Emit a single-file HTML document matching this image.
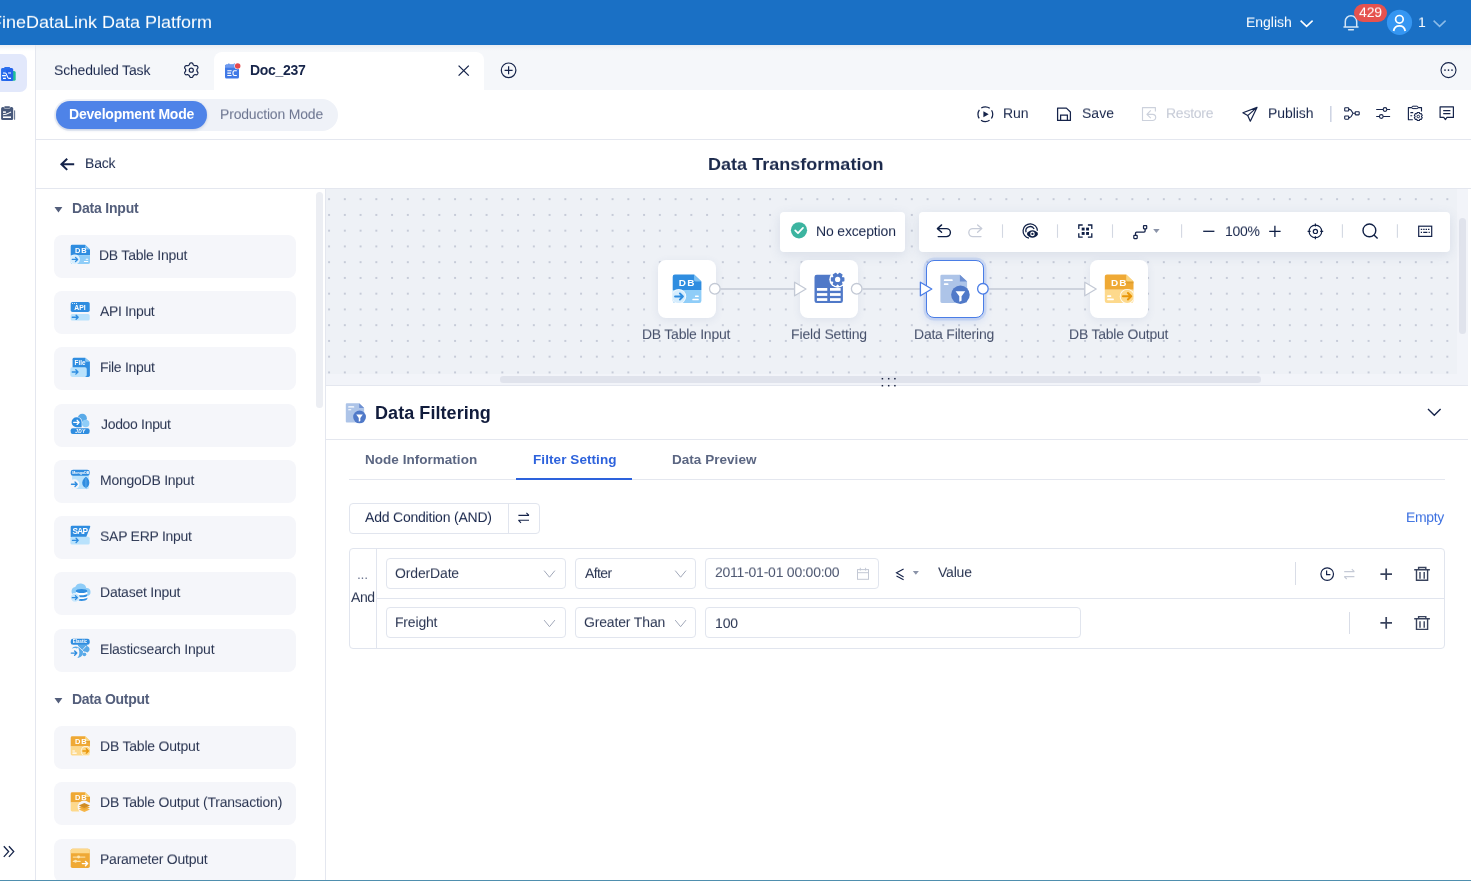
<!DOCTYPE html>
<html lang="en">
<head>
<meta charset="utf-8">
<title>FineDataLink Data Platform</title>
<style>
*{box-sizing:border-box;margin:0;padding:0}
html,body{width:1471px;height:881px;overflow:hidden;background:#fff}
body{font-family:"Liberation Sans",sans-serif;font-size:14px;color:#1f2b48;position:relative}
.a{position:absolute}
.t{position:absolute;white-space:nowrap;line-height:20px;height:20px;will-change:transform}
svg.ov{position:absolute;left:0;top:0;width:1471px;height:881px;overflow:visible;pointer-events:none;will-change:transform}
svg text{font-family:"Liberation Sans",sans-serif}
#hdr{left:0;top:0;width:1471px;height:45px;background:#1a70c5}
#rail{left:0;top:45px;width:36px;height:836px;background:linear-gradient(#eceef3 0,#fafbfc 4px,#fff 6px);border-right:1px solid #e4e7ef}
#railact{left:-10px;top:54px;width:37px;height:38px;background:#e2e8fb;border-radius:7px}
#tabs{left:36px;top:45px;width:1435px;height:45px;background:linear-gradient(#e9ecf2 0,#f3f5f9 4px,#f5f7fa 6px)}
#tabact{left:214px;top:52px;width:270px;height:38px;background:#fff;border-radius:8px 8px 0 0}
#modebar{left:36px;top:90px;width:1435px;height:50px;background:#fff;border-bottom:1px solid #e4e7ef}
#pill{left:54px;top:99px;width:284px;height:32px;background:#eff2f8;border-radius:16px}
#pillact{left:56px;top:101px;width:151px;height:27.5px;background:#4e83e8;border-radius:14px;box-shadow:0 1px 3px rgba(60,90,160,.25)}
#titlebar{left:36px;top:140px;width:1435px;height:49px;background:#fff;border-bottom:1px solid #e4e7ef}
#side{left:36px;top:189px;width:290px;height:692px;background:#fff;border-right:1px solid #e4e7ef}
#sidescroll{left:316px;top:191.5px;width:7px;height:216.5px;border-radius:3.5px;background:#eceef3}
.item{position:absolute;left:54px;width:242px;height:43px;background:#f5f6fa;border-radius:8px}
#canvas{left:326px;top:189px;width:1131px;height:185px;background-color:#eef1f6;
 background-image:radial-gradient(circle at 50% 50%,#c6cbd8 0,#c6cbd8 0.75px,rgba(198,203,216,0) 1.35px);background-size:15.76px 15.76px;background-position:-4.8px 2.3px}
#vtrack{left:1457px;top:189px;width:11px;height:196px;background:#f2f4f9}
#vthumb{left:1459px;top:218px;width:7px;height:116px;border-radius:3.5px;background:#e0e3ec}
#htrack{left:326px;top:374px;width:1131px;height:11px;background:#f2f4f9}
#hthumb{left:500px;top:376.2px;width:761px;height:6.6px;border-radius:3.3px;background:#e0e3ec}
#cline{left:326px;top:385px;width:1142px;height:1px;background:#e4e7ef}
.tb{position:absolute;background:#fff;border-radius:4px;box-shadow:0 3px 12px rgba(70,90,140,.13)}
.node{position:absolute;width:58px;height:58px;background:#fff;border-radius:8px;box-shadow:0 2px 8px rgba(70,90,140,.09)}
#panel{left:326px;top:386px;width:1145px;height:495px;background:#fff}
.hl{position:absolute;height:1px;background:#e4e7ef}
.vl{position:absolute;width:1px;background:#d9dde7}
.box{position:absolute;border:1px solid #e1e5ee;border-radius:4px;background:#fff}
#bottomline{left:0;top:880px;width:1471px;height:1px;background:#4f8fae}

</style>
</head>
<body>
<div id="hdr" class="a"></div>
<div id="rail" class="a"></div>
<div id="railact" class="a"></div>
<div id="tabs" class="a"></div>
<div id="tabact" class="a"></div>
<div id="modebar" class="a"></div>
<div id="pill" class="a"></div>
<div id="pillact" class="a"></div>
<div id="titlebar" class="a"></div>
<div id="side" class="a"></div>
<div id="sidescroll" class="a"></div>
<div class="item" style="top:235px"></div>
<div class="item" style="top:291px"></div>
<div class="item" style="top:347px"></div>
<div class="item" style="top:404px"></div>
<div class="item" style="top:460px"></div>
<div class="item" style="top:516px"></div>
<div class="item" style="top:572px"></div>
<div class="item" style="top:629px"></div>
<div class="item" style="top:726px"></div>
<div class="item" style="top:782px"></div>
<div class="item" style="top:839px"></div>
<div id="canvas" class="a"></div>
<div id="vtrack" class="a"></div>
<div id="vthumb" class="a"></div>
<div id="htrack" class="a"></div>
<div id="hthumb" class="a"></div>
<div id="cline" class="a"></div>
<div class="tb" style="left:780px;top:212px;width:125px;height:40px"></div>
<div class="tb" style="left:919px;top:212px;width:531px;height:40px"></div>
<div class="node" style="left:658px;top:260px"></div>
<div class="node" style="left:800px;top:260px"></div>
<div class="node" style="left:926px;top:260px;border:1.5px solid #4a7de6;box-shadow:0 0 0 2.5px rgba(74,125,230,.16),0 2px 8px rgba(74,125,230,.25)"></div>
<div class="node" style="left:1090px;top:260px"></div>
<div id="panel" class="a"></div>
<div class="hl" style="left:326px;top:439px;width:1142px"></div>
<div class="hl" style="left:349px;top:479px;width:1096px"></div>
<div class="a" style="left:516px;top:478px;width:116px;height:2px;background:#2d62dc"></div>
<div class="box" style="left:349px;top:503px;width:191px;height:31px"></div>
<div class="vl" style="left:508px;top:503px;height:31px;background:#e1e5ee"></div>
<div class="box" style="left:349px;top:548px;width:1096px;height:101px"></div>
<div class="vl" style="left:376px;top:549px;height:99px;background:#e1e5ee"></div>
<div class="hl" style="left:377px;top:598px;width:1067px;background:#e1e5ee"></div>
<div class="box" style="left:386px;top:558px;width:180px;height:31px"></div>
<div class="box" style="left:575px;top:558px;width:121px;height:31px"></div>
<div class="box" style="left:705px;top:558px;width:174px;height:31px"></div>
<div class="box" style="left:386px;top:607px;width:180px;height:31px"></div>
<div class="box" style="left:575px;top:607px;width:121px;height:31px"></div>
<div class="box" style="left:705px;top:607px;width:376px;height:31px"></div>
<div class="vl" style="left:1295px;top:562px;height:23px"></div>
<div class="vl" style="left:1349px;top:612px;height:22px"></div>
<div id="bottomline" class="a"></div>

<svg class="ov" viewBox="0 0 1471 881"><clipPath id="cpdb"><path d="M1.5 0H14.6L19.6 4.8V18A1.5 1.5 0 0 1 18.1 19.5H1.5A1.5 1.5 0 0 1 0 18V1.5A1.5 1.5 0 0 1 1.5 0Z"/></clipPath><path d="M1300.6 20.6L1306.6 26.4L1312.6 20.6" fill="none" stroke="#fff" stroke-width="1.5"/><path d="M1344 27H1358M1345.3 27V21.4A5.7 5.7 0 0 1 1356.7 21.4V27M1348.6 29.7H1353.4" fill="none" stroke="#d3e5f6" stroke-width="1.5" stroke-linecap="round" stroke-linejoin="round"/><rect x="1354" y="4" width="33" height="18" rx="9" fill="#e5524f"/><circle cx="1399.5" cy="22.4" r="12.6" fill="#3596f2"/><circle cx="1399.4" cy="19.3" r="3.8" fill="none" stroke="#fff" stroke-width="1.7"/><path d="M1393.6 31A5.9 6.2 0 0 1 1405.2 31" fill="none" stroke="#fff" stroke-width="1.8"/><path d="M1433.6 20.6L1439.6 26.4L1445.6 20.6" fill="none" stroke="#8bbbe8" stroke-width="1.5"/></svg>
<svg class="ov" viewBox="0 0 1471 881"><rect x="5" y="71" width="10.7" height="9.8" rx="1.6" fill="#1fbf98"/><rect x="1.1" y="68" width="12.1" height="13" rx="1.5" fill="#2463eb"/><rect x="1.1" y="68" width="5" height="13" rx="1.5" fill="#2b74f0" opacity=".6"/><rect x="4.1" y="66.9" width="6.1" height="2.5" rx="1" fill="#2a6eee"/><path d="M3 73H5.2C7.2 73 6.8 78.3 8.8 78.3H11M8.1 73H11M2.1 75.6H5.9M3 78.3H5.9" fill="none" stroke="#fff" stroke-width="1.15"/><rect x="1.1" y="107.1" width="12.1" height="12.8" rx="1.5" fill="#47587a"/><rect x="4.1" y="106" width="6.1" height="2.4" rx=".9" fill="#47587a" stroke="#fff" stroke-width=".5"/><path d="M3 112.1H5.9" stroke="#fff" stroke-width="1.5"/><path d="M3 114.8C6.6 114.8 8 113.6 11 111.9" fill="none" stroke="#fff" stroke-width="1.1"/><path d="M3 117.2H11" stroke="#fff" stroke-width="1.6"/><rect x="14" y="110.2" width="1.15" height="9.6" rx=".5" fill="#6c7a96"/><path d="M3.8 846.3L8.6 851.6L3.8 856.9M8.9 846.3L13.7 851.6L8.9 856.9" fill="none" stroke="#17254a" stroke-width="1.35"/></svg>
<svg class="ov" viewBox="0 0 1471 881"><path d="M196.90 70.20 L196.90 70.49 L196.93 70.79 L197.00 71.10 L197.20 71.45 L197.53 71.87 L197.84 72.32 L197.95 72.75 L197.92 73.15 L197.79 73.51 L197.62 73.85 L197.41 74.17 L197.16 74.46 L196.84 74.69 L196.41 74.80 L195.86 74.76 L195.33 74.68 L194.93 74.69 L194.62 74.78 L194.36 74.91 L194.10 75.05 L193.85 75.20 L193.60 75.37 L193.37 75.59 L193.16 75.93 L192.97 76.43 L192.73 76.92 L192.42 77.24 L192.06 77.40 L191.68 77.48 L191.30 77.50 L190.92 77.48 L190.54 77.40 L190.18 77.24 L189.87 76.92 L189.63 76.43 L189.44 75.93 L189.23 75.59 L189.00 75.37 L188.75 75.20 L188.50 75.05 L188.24 74.91 L187.98 74.78 L187.67 74.69 L187.27 74.68 L186.74 74.76 L186.19 74.80 L185.76 74.69 L185.44 74.46 L185.19 74.17 L184.98 73.85 L184.81 73.51 L184.68 73.15 L184.65 72.75 L184.76 72.32 L185.07 71.87 L185.40 71.45 L185.60 71.10 L185.67 70.79 L185.70 70.49 L185.70 70.20 L185.70 69.91 L185.67 69.61 L185.60 69.30 L185.40 68.95 L185.07 68.53 L184.76 68.08 L184.65 67.65 L184.68 67.25 L184.81 66.89 L184.98 66.55 L185.19 66.23 L185.44 65.94 L185.76 65.71 L186.19 65.60 L186.74 65.64 L187.27 65.72 L187.67 65.71 L187.98 65.62 L188.24 65.49 L188.50 65.35 L188.75 65.20 L189.00 65.03 L189.23 64.81 L189.44 64.47 L189.63 63.97 L189.87 63.48 L190.18 63.16 L190.54 63.00 L190.92 62.92 L191.30 62.90 L191.68 62.92 L192.06 63.00 L192.42 63.16 L192.73 63.48 L192.97 63.97 L193.16 64.47 L193.37 64.81 L193.60 65.03 L193.85 65.20 L194.10 65.35 L194.36 65.49 L194.62 65.62 L194.93 65.71 L195.33 65.72 L195.86 65.64 L196.41 65.60 L196.84 65.71 L197.16 65.94 L197.41 66.23 L197.62 66.55 L197.79 66.89 L197.92 67.25 L197.95 67.65 L197.84 68.08 L197.53 68.53 L197.20 68.95 L197.00 69.30 L196.93 69.61 L196.90 69.91Z" fill="none" stroke="#15234a" stroke-width="1.2" stroke-linejoin="round"/><circle cx="191.3" cy="70.2" r="2.05" fill="none" stroke="#15234a" stroke-width="1.15"/><rect x="228.1" y="63.2" width="1.5" height="2.6" rx=".7" fill="#7ea6f1"/><rect x="233.7" y="63.2" width="1.5" height="2.6" rx=".7" fill="#7ea6f1"/><rect x="225" y="64.6" width="14" height="13.9" rx="1.5" fill="#4079e6"/><path d="M226.5 64.6H237.5A1.5 1.5 0 0 1 239 66.1V67.8H225V66.1A1.5 1.5 0 0 1 226.5 64.6Z" fill="#6f9bef"/><path d="M227.3 70.7H231.6M227.3 73.1H231M227.3 75.5H231.6M236.8 70.7H234.4C232.5 70.7 232.5 75.5 234.4 75.5H236.8" fill="none" stroke="#fff" stroke-width="1.1"/><circle cx="237.7" cy="65.9" r="3.3" fill="#fff"/><circle cx="237.7" cy="65.9" r="2.75" fill="#e5484d"/><path d="M458.6 65.6L468.8 75.6M468.8 65.6L458.6 75.6" stroke="#15234a" stroke-width="1.3"/><circle cx="508.6" cy="70.3" r="7.3" fill="none" stroke="#15234a" stroke-width="1.2"/><path d="M504.6 70.3H512.6M508.6 66.3V74.3" stroke="#15234a" stroke-width="1.2"/><circle cx="1448.5" cy="70.1" r="7.5" fill="none" stroke="#15234a" stroke-width="1.1"/><circle cx="1445" cy="70.1" r=".85" fill="#15234a"/><circle cx="1448.5" cy="70.1" r=".85" fill="#15234a"/><circle cx="1452" cy="70.1" r=".85" fill="#15234a"/></svg>
<svg class="ov" viewBox="0 0 1471 881"><circle cx="985.35" cy="114.25" r="7.4" fill="none" stroke="#15234a" stroke-width="1.25" stroke-dasharray="9.04 2.584" stroke-dashoffset="4.52"/><path d="M983.4 111.3V117.2L988.7 114.25Z" fill="#15234a"/><path d="M1057.6 108.1H1066.4L1070.4 112V120.4H1057.6Z" fill="none" stroke="#15234a" stroke-width="1.25" stroke-linejoin="round"/><path d="M1060.6 120.4V115H1067.4V120.4" fill="none" stroke="#15234a" stroke-width="1.25"/><path d="M1155.4 111.6V107.6H1142.5V120.5H1152.6A3.1 3.1 0 0 0 1152.6 114.3H1147.2M1150.8 110.3L1146.9 114.3L1150.8 118.1" fill="none" stroke="#ccd1dc" stroke-width="1.15" stroke-linejoin="round"/><path d="M1257 107.4L1242.9 112.7L1247.7 115.6L1250.3 121.2ZM1247.7 115.6L1257 107.4" fill="none" stroke="#15234a" stroke-width="1.2" stroke-linejoin="round"/><path d="M1330.8 106V122" stroke="#ccd2e2" stroke-width="1.5"/><rect x="1344.7" y="107.8" width="4" height="3.2" rx=".6" fill="none" stroke="#15234a" stroke-width="1.1"/><rect x="1344.7" y="116" width="4" height="3.2" rx=".6" fill="none" stroke="#15234a" stroke-width="1.1"/><rect x="1355.2" y="111.7" width="4" height="3.2" rx=".6" fill="none" stroke="#15234a" stroke-width="1.1"/><path d="M1348.7 109.4H1349.6C1352 109.4 1352 113.3 1353.4 113.3H1355.2M1348.7 117.6H1349.6C1352 117.6 1352 113.3 1353.4 113.3" fill="none" stroke="#15234a" stroke-width="1.1"/><path d="M1376.2 109.5H1390.1M1376.2 116.5H1390.1" stroke="#15234a" stroke-width="1.2"/><circle cx="1385" cy="109.5" r="1.85" fill="#fff" stroke="#15234a" stroke-width="1.1"/><circle cx="1381.3" cy="116.5" r="1.85" fill="#fff" stroke="#15234a" stroke-width="1.1"/><path d="M1412.8 119.7H1408.4V107.6H1421.5V111.4" fill="none" stroke="#15234a" stroke-width="1.15" stroke-linejoin="round"/><rect x="1411.8" y="106.2" width="6.3" height="2.4" rx="1.2" fill="#fff" stroke="#15234a" stroke-width="1"/><path d="M1410.4 112.6H1413.2M1410.4 115.7H1412.2" stroke="#15234a" stroke-width="1.1"/><path d="M1422.31 117.57 L1421.23 119.43 L1420.21 119.13 L1419.62 119.47 L1419.37 120.51 L1417.23 120.51 L1416.98 119.47 L1416.39 119.13 L1415.37 119.43 L1414.29 117.57 L1415.07 116.84 L1415.07 116.16 L1414.29 115.43 L1415.37 113.57 L1416.39 113.87 L1416.98 113.53 L1417.23 112.49 L1419.37 112.49 L1419.62 113.53 L1420.21 113.87 L1421.23 113.57 L1422.31 115.43 L1421.53 116.16 L1421.53 116.84Z" fill="#fff" stroke="#15234a" stroke-width="1.05" stroke-linejoin="round"/><circle cx="1418.3" cy="116.5" r="1.3" fill="none" stroke="#15234a" stroke-width="1"/><path d="M1440.1 106.8H1453.4V117.4H1447L1445.4 119.6L1443.8 117.4H1440.1Z" fill="none" stroke="#15234a" stroke-width="1.2" stroke-linejoin="round"/><path d="M1443.2 110.6H1450.4M1443.2 113.6H1450.4" stroke="#15234a" stroke-width="1.2"/><path d="M61.6 164.3H74.2M67.2 158.7L61.4 164.3L67.2 169.9" fill="none" stroke="#15234a" stroke-width="2" stroke-linejoin="miter"/><path d="M54.5 207H62.4L58.45 212.4Z" fill="#535e7b"/><path d="M54.5 698H62.4L58.45 703.4Z" fill="#535e7b"/></svg>
<svg class="ov" viewBox="0 0 1471 881"><g transform="translate(70.70 244.70) scale(0.9850)"><path d="M1.5 0H14.6L19.6 4.8V10.6H0V1.5A1.5 1.5 0 0 1 1.5 0Z" fill="#2f8de0"/><path d="M14.6 0L19.6 4.8H15.6A1 1 0 0 1 14.6 3.8Z" fill="#7cc0f2"/><path d="M0 10.6H19.6V18A1.5 1.5 0 0 1 18.1 19.5H1.5A1.5 1.5 0 0 1 0 18Z" fill="#8fcdf8"/><g clip-path="url(#cpdb)"><circle cx="4.1" cy="15" r="5.1" fill="#fff" opacity=".9"/><circle cx="4.1" cy="15" r="4.5" fill="#d6edfd"/></g><path d="M1.6 15H7M4.9 12.9L7 15L4.9 17.1" fill="none" stroke="#2f8de0" stroke-width="1.3" stroke-linecap="round" stroke-linejoin="round"/><rect x="15.2" y="14.3" width="2.6" height="1.1" rx=".4" fill="#fff"/><rect x="13.4" y="16.5" width="4.4" height="1.1" rx=".4" fill="#fff"/><text x="4.3" y="8.1" font-size="7.6" font-weight="700" fill="#fff" letter-spacing="0.9">DB</text></g><g transform="translate(70.70 300.70) scale(0.9850)"><rect x="0" y="1.2" width="19.3" height="10.2" rx="1.8" fill="#2f8de0"/><circle cx="1.9" cy="2.8" r=".55" fill="#fff"/><circle cx="3.9" cy="2.8" r=".55" fill="#fff"/><circle cx="5.9" cy="2.8" r=".55" fill="#fff"/><text x="3.6" y="9.4" font-size="6.9" font-weight="700" fill="#fff" letter-spacing=".1">API</text><rect x="0" y="13.6" width="19.3" height="6.6" rx="1.6" fill="#b9e2fc"/><path d="M1.6 16.8H7.6M5.5 14.700000000000001L7.6 16.8L5.5 18.900000000000002" fill="none" stroke="#2f8de0" stroke-width="1.4" stroke-linecap="round" stroke-linejoin="round"/></g><g transform="translate(70.70 356.70) scale(0.9850)"><g transform="translate(0 1.1)"><path d="M3.4 0H14.7L19.5 4V17.8A1.6 1.6 0 0 1 17.9 19.4H1.9V1.5A1.5 1.5 0 0 1 3.4 0Z" fill="#2f8de0"/><path d="M14.7 0L19.5 4H15.7A1 1 0 0 1 14.7 3Z" fill="#8ccaf6"/><rect x="-0.4" y="9.6" width="16.7" height="9.8" rx="1.8" fill="#b9e2fc"/><path d="M1.6 14.4H7.4M5.2 12.2L7.4 14.4L5.2 16.6" fill="none" stroke="#2f8de0" stroke-width="1.4" stroke-linecap="round" stroke-linejoin="round"/><text x="3.8" y="7.1" font-size="6.4" font-weight="700" fill="#fff" letter-spacing=".1">File</text></g></g><g transform="translate(70.70 413.70) scale(0.9850)"><circle cx="11.8" cy="4.6" r="4.6" fill="#5aaae8"/><circle cx="15.2" cy="10" r="3.8" fill="#8fcdf8"/><circle cx="6" cy="8.8" r="5.8" fill="#f5f6fa"/><path d="M6 3.6A5.1 5.1 0 1 0 6 13.8H11.1V8.7A5.1 5.1 0 0 0 6 3.6Z" fill="#2f8de0"/><path d="M3 8.8H8.6M6.5 6.700000000000001L8.6 8.8L6.5 10.9" fill="none" stroke="#fff" stroke-width="1.3" stroke-linecap="round" stroke-linejoin="round"/><rect x="0" y="14.8" width="19.2" height="5.8" rx="2" fill="#2f8de0"/><text x="4.6" y="19.4" font-size="4.8" font-weight="700" font-style="italic" fill="#fff" letter-spacing=".4">JDY</text></g><g transform="translate(70.70 469.70) scale(0.9850)"><rect x="1.4" y="5" width="17" height="14.6" rx="1.2" fill="#b9e2fc"/><rect x="0" y="0" width="19.3" height="6.2" rx="2.4" fill="#2f8de0"/><text x="1.6" y="4.5" font-size="3.7" font-weight="700" fill="#fff">MongoDB</text><path d="M15.5 7.2C18.6 9.6 19.6 12.6 18.6 15.2C18 16.8 16.8 17.8 15.8 18.2L15.7 20.2L15.2 18.2C14 17.8 12.6 16.8 12 15.2C11 12.6 12.4 9.6 15.5 7.2Z" fill="#2f8de0"/><path d="M15.5 8.4V18" stroke="#8fcdf8" stroke-width=".5"/><circle cx="3.8" cy="14.8" r="5" fill="#f5f6fa"/><path d="M0.8 14.8H6.6M4.3999999999999995 12.600000000000001L6.6 14.8L4.3999999999999995 17.0" fill="none" stroke="#2f8de0" stroke-width="1.4" stroke-linecap="round" stroke-linejoin="round"/></g><g transform="translate(70.70 525.70) scale(0.9850)"><path d="M1.4 0H19A.9.9 0 0 1 19.8 1.2L15.8 11.4H0V1.4A1.4 1.4 0 0 1 1.4 0Z" fill="#2f8de0"/><text x="1.9" y="8.4" font-size="8.4" font-weight="700" fill="#fff" letter-spacing="-.75">SAP</text><rect x="-0.3" y="11.2" width="19.6" height="8" rx="1.6" fill="#b9e2fc"/><path d="M1.8 14.9H7.6M5.5 12.8L7.6 14.9L5.5 17.0" fill="none" stroke="#2f8de0" stroke-width="1.4" stroke-linecap="round" stroke-linejoin="round"/></g><g transform="translate(70.70 581.70) scale(0.9850)"><g transform="translate(0 1)"><path d="M5 13.4A4.6 4.6 0 0 1 4.6 4.3A6 6 0 0 1 15.8 5.4A4 4 0 0 1 16.4 13.4Z" fill="#8fcdf8"/><path d="M5 10.4C5 8 17 8 17 10.4V16.6C17 19.2 5 19.2 5 16.6Z" fill="#fff"/><ellipse cx="11" cy="8.4" rx="5.9" ry="2.1" fill="#2f8de0"/><path d="M5.1 11.2C6.4 13.2 15.6 13.2 16.9 11.2V13.2C15.6 15.4 6.4 15.4 5.1 13.2Z" fill="#2f8de0"/><path d="M5.1 15C6.4 17 15.6 17 16.9 15V16.6C15.6 19.2 6.4 19.2 5.1 16.6Z" fill="#2f8de0"/><circle cx="4.4" cy="15.2" r="4.8" fill="#f5f6fa"/><circle cx="4.4" cy="15.2" r="4.2" fill="#c7e7fc"/><path d="M1.6 15.2H6.8M4.8 13.2L6.8 15.2L4.8 17.2" fill="none" stroke="#2f8de0" stroke-width="1.3" stroke-linecap="round" stroke-linejoin="round"/></g></g><g transform="translate(70.70 638.70) scale(0.9850)"><path d="M7.2 5.6H16.2L17 7.6C19.8 8.6 19.9 12.6 17 13.9L14.4 12.9L12.4 13.4C12.8 16.6 10.4 19 6.8 19.5C9 17 9.4 13.6 8 10.2Z" fill="#5aaae8"/><circle cx="13.9" cy="15.9" r="1.9" fill="#5aaae8"/><path d="M6.7 6.9L13.8 13.8M15.7 7.4L12.2 11.2" stroke="#f5f6fa" stroke-width=".85"/><path d="M1.1 10.3C2.6 7.6 5.8 7.2 7.6 8.7L6.4 9.9C5 9 3 9.3 1.1 10.3Z" fill="#5aaae8"/><rect x="0" y="0" width="19.3" height="6.2" rx="2.4" fill="#2f8de0"/><text x="2.2" y="4.6" font-size="4.6" font-weight="700" fill="#fff" letter-spacing="-.05">Elastic</text><circle cx="3.6" cy="14.6" r="4.7" fill="#f5f6fa"/><path d="M0.6 14.6H6.2M4.0 12.399999999999999L6.2 14.6L4.0 16.8" fill="none" stroke="#2f8de0" stroke-width="1.4" stroke-linecap="round" stroke-linejoin="round"/></g><g transform="translate(70.70 736.30) scale(0.9850)"><path d="M1.5 0H14.6L19.6 4.8V10.4H0V1.5A1.5 1.5 0 0 1 1.5 0Z" fill="#efa935"/><path d="M14.6 0L19.6 4.8H15.6A1 1 0 0 1 14.6 3.8Z" fill="#fbd57e"/><rect x="14.8" y="5" width="4.8" height="1.1" fill="#d79a2c" opacity=".7"/><path d="M0 10.4H19.6V18A1.5 1.5 0 0 1 18.1 19.5H1.5A1.5 1.5 0 0 1 0 18Z" fill="#fdd98c"/><g clip-path="url(#cpdb)"><circle cx="15.3" cy="15" r="5.1" fill="#fff" opacity=".9"/><circle cx="15.3" cy="15" r="4.5" fill="#fdd98c"/></g><path d="M12.4 14.9H18.0M15.8 12.7L18.0 14.9L15.8 17.1" fill="none" stroke="#e8960a" stroke-width="1.4" stroke-linecap="round" stroke-linejoin="round"/><rect x="1.6" y="14.3" width="2.8" height="1.1" rx=".4" fill="#fff"/><rect x="1.6" y="16.5" width="4.6" height="1.1" rx=".4" fill="#fff"/><text x="4.3" y="8.1" font-size="7.6" font-weight="700" fill="#fff" letter-spacing="0.9">DB</text></g><g transform="translate(70.70 792.30) scale(0.9850)"><path d="M1.5 0H14.6L19.6 4.8V10.4H0V1.5A1.5 1.5 0 0 1 1.5 0Z" fill="#efa935"/><path d="M14.6 0L19.6 4.8H15.6A1 1 0 0 1 14.6 3.8Z" fill="#fbd57e"/><rect x="14.8" y="5" width="4.8" height="1.1" fill="#d79a2c" opacity=".6"/><path d="M0 10.4H9V19.5H1.5A1.5 1.5 0 0 1 0 18Z" fill="#fdd98c"/><circle cx="13.6" cy="15" r="6.6" fill="#f5f6fa"/><path d="M8.2 17.4L13.8 15L19.6 17.4L13.8 19.9Z" fill="#f5b548"/><path d="M8.2 15.4L13.8 13L19.6 15.4L13.8 17.9Z" fill="#efa935"/><path d="M8.2 13.3L13.8 10.8L19.6 13.3L13.8 15.9Z" fill="#d08c24"/><text x="4.3" y="8.1" font-size="7.6" font-weight="700" fill="#fff" letter-spacing=".9">DB</text></g><g transform="translate(70.70 848.70) scale(0.9850)"><rect x="0" y="0" width="19.4" height="19.6" rx="1.8" fill="#efa935"/><path d="M1.8 0H17.6A1.8 1.8 0 0 1 19.4 1.8V4.6H0V1.8A1.8 1.8 0 0 1 1.8 0Z" fill="#fdd98c"/><rect x="2" y="7.9" width="13" height="1.2" rx=".6" fill="#fbdc9a"/><circle cx="8" cy="8.5" r="1.5" fill="#fde7b5"/><rect x="2" y="12.2" width="8.2" height="1.2" rx=".6" fill="#fde7b5"/><circle cx="4.9" cy="12.8" r="1.5" fill="#fde7b5"/><path d="M11.8 15.1H17.2M15.0 12.899999999999999L17.2 15.1L15.0 17.3" fill="none" stroke="#fff" stroke-width="1.4" stroke-linecap="round" stroke-linejoin="round"/></g></svg>
<svg class="ov" viewBox="0 0 1471 881"><path d="M720.5 289H795" stroke="#c3c9d5" stroke-width="1.6"/><path d="M862.5 289H921" stroke="#c3c9d5" stroke-width="1.6"/><path d="M989 289H1085" stroke="#c3c9d5" stroke-width="1.6"/><path d="M794.6 282.2L806.0 289L794.6 295.8Z" fill="#fff" stroke="#c3c9d5" stroke-width="1.3" stroke-linejoin="round"/><path d="M920.4 282.2L931.8 289L920.4 295.8Z" fill="#fff" stroke="#4a7de6" stroke-width="1.3" stroke-linejoin="round"/><path d="M1084.8 282.2L1096.2 289L1084.8 295.8Z" fill="#fff" stroke="#c3c9d5" stroke-width="1.3" stroke-linejoin="round"/><circle cx="714.8" cy="288.8" r="5.3" fill="#fff" stroke="#c3c9d5" stroke-width="1.3"/><circle cx="856.7" cy="288.8" r="5.3" fill="#fff" stroke="#c3c9d5" stroke-width="1.3"/><circle cx="982.9" cy="288.8" r="5.3" fill="#fff" stroke="#4a7de6" stroke-width="1.3"/><g transform="translate(672.70 274.50) scale(1.4650)"><path d="M1.5 0H14.6L19.6 4.8V10.6H0V1.5A1.5 1.5 0 0 1 1.5 0Z" fill="#2f8de0"/><path d="M14.6 0L19.6 4.8H15.6A1 1 0 0 1 14.6 3.8Z" fill="#7cc0f2"/><path d="M0 10.6H19.6V18A1.5 1.5 0 0 1 18.1 19.5H1.5A1.5 1.5 0 0 1 0 18Z" fill="#8fcdf8"/><g clip-path="url(#cpdb)"><circle cx="4.1" cy="15" r="5.1" fill="#fff" opacity=".9"/><circle cx="4.1" cy="15" r="4.5" fill="#d6edfd"/></g><path d="M1.6 15H7M4.9 12.9L7 15L4.9 17.1" fill="none" stroke="#2f8de0" stroke-width="1.3" stroke-linecap="round" stroke-linejoin="round"/><rect x="15.2" y="14.3" width="2.6" height="1.1" rx=".4" fill="#fff"/><rect x="13.4" y="16.5" width="4.4" height="1.1" rx=".4" fill="#fff"/><text x="4.2" y="7.95" font-size="6.8" font-weight="700" fill="#fff" letter-spacing="0.8">DB</text></g><g transform="translate(814.50 274.80) scale(1.4200)"><rect x="0" y="0" width="20" height="19.8" rx="1.6" fill="#5079c8"/><circle cx="16.3" cy="3.25" r="5.9" fill="#fff"/><path d="M20.59 2.29 L20.59 4.21 L19.15 4.46 L18.78 5.11 L19.28 6.49 L17.62 7.45 L16.68 6.33 L15.92 6.33 L14.98 7.45 L13.32 6.49 L13.82 5.11 L13.45 4.46 L12.01 4.21 L12.01 2.29 L13.45 2.04 L13.82 1.39 L13.32 0.01 L14.98 -0.95 L15.92 0.17 L16.68 0.17 L17.62 -0.95 L19.28 0.01 L18.78 1.39 L19.15 2.04Z" fill="#5079c8" stroke="#5079c8" stroke-width="1" stroke-linejoin="round"/><circle cx="16.3" cy="3.25" r="1.85" fill="#fff"/><rect x="1.7" y="9.3" width="7.3" height="1.95" fill="#fff"/><rect x="10.9" y="9.3" width="7.5" height="1.95" fill="#fff"/><rect x="1.7" y="12.9" width="7.3" height="1.95" fill="#fff"/><rect x="10.9" y="12.9" width="7.5" height="1.95" fill="#fff"/><rect x="1.7" y="16.45" width="7.3" height="1.95" fill="#fff"/><rect x="10.9" y="16.45" width="7.5" height="1.95" fill="#fff"/></g><g transform="translate(940.40 274.70) scale(1.4200)"><path d="M1 0H13.7L18.8 4.85V18.8A1 1 0 0 1 17.8 19.85H1A1 1 0 0 1 0 18.85V1A1 1 0 0 1 1 0Z" fill="#adc4e8"/><path d="M13.7 0L18.8 4.85H13.7Z" fill="#6e90d2"/><rect x="2.4" y="3.25" width="6.3" height="1.2" rx=".6" fill="#fff"/><rect x="2.4" y="6.1" width="3.3" height="1.2" rx=".6" fill="#fff"/><circle cx="14.1" cy="14.1" r="6.55" fill="#5079c8"/><path d="M10.7 11.6H17.5L14.9 15.1V18.3L13.3 19V15.1Z" fill="#fff"/></g><g transform="translate(1104.80 274.40) scale(1.4650)"><path d="M1.5 0H14.6L19.6 4.8V10.4H0V1.5A1.5 1.5 0 0 1 1.5 0Z" fill="#efa935"/><path d="M14.6 0L19.6 4.8H15.6A1 1 0 0 1 14.6 3.8Z" fill="#fbd57e"/><rect x="14.8" y="5" width="4.8" height="1.1" fill="#d79a2c" opacity=".7"/><path d="M0 10.4H19.6V18A1.5 1.5 0 0 1 18.1 19.5H1.5A1.5 1.5 0 0 1 0 18Z" fill="#fdd98c"/><g clip-path="url(#cpdb)"><circle cx="15.3" cy="15" r="5.1" fill="#fff" opacity=".9"/><circle cx="15.3" cy="15" r="4.5" fill="#fdd98c"/></g><path d="M12.4 14.9H18.0M15.8 12.7L18.0 14.9L15.8 17.1" fill="none" stroke="#e8960a" stroke-width="1.4" stroke-linecap="round" stroke-linejoin="round"/><rect x="1.6" y="14.3" width="2.8" height="1.1" rx=".4" fill="#fff"/><rect x="1.6" y="16.5" width="4.6" height="1.1" rx=".4" fill="#fff"/><text x="4.2" y="7.95" font-size="6.8" font-weight="700" fill="#fff" letter-spacing="0.8">DB</text></g><circle cx="799" cy="230.3" r="8.1" fill="#3cb4a0"/><path d="M795.2 230.4L798 233.2L803 227.8" fill="none" stroke="#fff" stroke-width="1.7" stroke-linecap="round" stroke-linejoin="round"/><path d="M941.6 224.9L937.4 228.6L941.6 232.3M937.6 228.6H946.4A4 4 0 0 1 946.4 236.6H938.2" fill="none" stroke="#0f1f45" stroke-width="1.4" stroke-linecap="round" stroke-linejoin="round"/><path d="M977.6 224.9L981.8 228.6L977.6 232.3M981.6 228.6H972.8A4 4 0 0 0 972.8 236.6H981" fill="none" stroke="#c7ccd8" stroke-width="1.3" stroke-linecap="round" stroke-linejoin="round"/><path d="M1002.5 224.3V237.8" stroke="#d3d8e2" stroke-width="1.1"/><path d="M1057.5 224.3V237.8" stroke="#d3d8e2" stroke-width="1.1"/><path d="M1112.5 224.3V237.8" stroke="#d3d8e2" stroke-width="1.1"/><path d="M1181.6 224.3V237.8" stroke="#d3d8e2" stroke-width="1.1"/><path d="M1342.4 224.3V237.8" stroke="#d3d8e2" stroke-width="1.1"/><path d="M1397.4 224.3V237.8" stroke="#d3d8e2" stroke-width="1.1"/><path d="M1037.46 230.75A7.2 7.2 0 1 0 1029 238.09" fill="none" stroke="#0f1f45" stroke-width="1.25"/><path d="M1034.14 228.93A4.4 4.4 0 0 0 1026.03 232.21" fill="none" stroke="#0f1f45" stroke-width="1.25"/><path d="M1026.8 233.9C1029 228.9 1035.9 228.9 1038.1 233.9C1035.9 238.9 1029 238.9 1026.8 233.9Z" fill="#0f1f45"/><circle cx="1032.45" cy="233.9" r="2.3" fill="#fff"/><circle cx="1032.45" cy="233.9" r="1.15" fill="#0f1f45"/><path d="M1078.8 228.9V225H1082.7M1087.9 225H1091.8V228.9M1091.8 233.3V237.2H1087.9M1082.7 237.2H1078.8V233.3" fill="none" stroke="#0f1f45" stroke-width="1.3"/><rect x="1081.7" y="227.6" width="2.9" height="2.9" fill="#0f1f45"/><rect x="1086.1" y="227.6" width="2.9" height="2.9" fill="#0f1f45"/><rect x="1081.7" y="232" width="2.9" height="2.9" fill="#0f1f45"/><rect x="1086.1" y="232" width="2.9" height="2.9" fill="#0f1f45"/><rect x="1143.5" y="225.6" width="3.2" height="3.2" rx=".5" fill="none" stroke="#15234a" stroke-width="1.2"/><rect x="1133.8" y="235.4" width="3.4" height="3.2" rx=".5" fill="none" stroke="#15234a" stroke-width="1.2"/><path d="M1145.1 228.8V231A1.1 1.1 0 0 1 1144 232.1H1136.6A1.1 1.1 0 0 0 1135.5 233.2V235.4" fill="none" stroke="#15234a" stroke-width="1.3"/><path d="M1153.2 229.1H1159.6L1156.4 232.9Z" fill="#8a93a8"/><path d="M1203.2 231.3H1214.4" stroke="#0f1f45" stroke-width="1.3"/><path d="M1269.2 231.3H1280.6M1274.9 225.7V236.9" stroke="#0f1f45" stroke-width="1.3"/><circle cx="1315.4" cy="231.4" r="6.3" fill="none" stroke="#0f1f45" stroke-width="1.2"/><circle cx="1315.4" cy="231.4" r="2.1" fill="none" stroke="#0f1f45" stroke-width="1.2"/><path d="M1315.4 223.6V226.6M1315.4 236.2V239.2M1307.6 231.4H1310.6M1320.2 231.4H1323.2" stroke="#0f1f45" stroke-width="1.2"/><circle cx="1369.4" cy="230.4" r="6.4" fill="none" stroke="#0f1f45" stroke-width="1.4"/><path d="M1374 235L1377.6 238.4" stroke="#0f1f45" stroke-width="1.4"/><rect x="1418.7" y="226.2" width="13" height="10.2" fill="none" stroke="#15234a" stroke-width="1.2"/><path d="M1420.8 229.4H1429.6" stroke="#15234a" stroke-width="1.1" stroke-dasharray="1.4 1"/><path d="M1420.8 232.4H1422M1423.2 232.4H1427.4M1428.6 232.4H1429.8" stroke="#15234a" stroke-width="1.1"/><rect x="881.65" y="377.95" width="1.5" height="1.5" fill="#1a2340"/><rect x="881.65" y="384.95" width="1.5" height="1.5" fill="#1a2340"/><rect x="887.95" y="377.95" width="1.5" height="1.5" fill="#1a2340"/><rect x="887.95" y="384.95" width="1.5" height="1.5" fill="#1a2340"/><rect x="894.15" y="377.95" width="1.5" height="1.5" fill="#1a2340"/><rect x="894.15" y="384.95" width="1.5" height="1.5" fill="#1a2340"/></svg>
<svg class="ov" viewBox="0 0 1471 881"><g transform="translate(345.80 403.20) scale(0.9750)"><path d="M1 0H13.7L18.8 4.85V18.8A1 1 0 0 1 17.8 19.85H1A1 1 0 0 1 0 18.85V1A1 1 0 0 1 1 0Z" fill="#adc4e8"/><path d="M13.7 0L18.8 4.85H13.7Z" fill="#6e90d2"/><rect x="2.4" y="3.25" width="6.3" height="1.2" rx=".6" fill="#fff"/><rect x="2.4" y="6.1" width="3.3" height="1.2" rx=".6" fill="#fff"/><circle cx="14.1" cy="14.1" r="6.55" fill="#5079c8"/><path d="M10.7 11.6H17.5L14.9 15.1V18.3L13.3 19V15.1Z" fill="#fff"/></g><path d="M1428 409L1434.3 415.2L1440.6 409" fill="none" stroke="#15234a" stroke-width="1.4"/><path d="M518.4 515.4H529M526.4 512.8L529 515.4M529 520.2H518.4M521 522.8L518.4 520.2" fill="none" stroke="#15234a" stroke-width="1.1"/><path d="M544.1 570.6L549.5 577.2L554.9 570.6" fill="none" stroke="#a0a7b8" stroke-width="1"/><path d="M675.2 570.6L680.6 577.2L686.0 570.6" fill="none" stroke="#a0a7b8" stroke-width="1"/><path d="M544.1 620.1L549.5 626.7L554.9 620.1" fill="none" stroke="#a0a7b8" stroke-width="1"/><path d="M675.2 620.1L680.6 626.7L686.0 620.1" fill="none" stroke="#a0a7b8" stroke-width="1"/><rect x="857.5" y="569.6" width="11" height="9.7" fill="none" stroke="#c3c8d4" stroke-width="1"/><path d="M857.5 572.7H868.5M860.3 567.8V570.6M865.6 567.8V570.6" stroke="#c3c8d4" stroke-width="1"/><path d="M903.6 569.1L896.5 572.8L903.6 576.9M903.6 579.8L896.5 575.9" fill="none" stroke="#15234a" stroke-width="1.1"/><path d="M912.8 571H918.9L915.85 574.8Z" fill="#8a93a8"/><circle cx="1327.2" cy="574.1" r="6.3" fill="none" stroke="#15234a" stroke-width="1.2"/><path d="M1326.6 570.4V574.7H1330.4" fill="none" stroke="#15234a" stroke-width="1.2"/><path d="M1344.2 571.6H1354.4M1351.8 569.2L1354.4 571.6M1354.4 576.6H1344.2M1346.8 579L1344.2 576.6" fill="none" stroke="#c5cad6" stroke-width="1.1"/><path d="M1380.4 574.2H1392M1386.2 568.4000000000001V580.0" stroke="#39435d" stroke-width="1.7"/><path d="M1380.4 622.9H1392M1386.2 617.1V628.6999999999999" stroke="#39435d" stroke-width="1.7"/><path d="M1418.6 569.5V567.5H1425.8V569.5M1414.2 569.6999999999999H1429.9M1416.5 569.9V580.3H1427.6V569.9M1420 572.1V578.6999999999999M1424.2 572.1V578.6999999999999" fill="none" stroke="#39435d" stroke-width="1.4"/><path d="M1418.6 618.6V616.6H1425.8V618.6M1414.2 618.8H1429.9M1416.5 619.0V629.4H1427.6V619.0M1420 621.2V627.8M1424.2 621.2V627.8" fill="none" stroke="#39435d" stroke-width="1.4"/></svg>
<div class="t" style="left:-8.80px;top:12.0px;font-size:18px;color:#fff;transform:scaleY(0.935);transform-origin:0 16.0px;">FineDataLink Data Platform</div>
<div class="t" style="left:1246.20px;top:12.0px;font-size:14px;color:#fff;letter-spacing:-0.033px;transform:scaleY(0.955);transform-origin:0 15.0px;">English</div>
<div class="t" style="left:1359.40px;top:2.0px;font-size:14px;color:#fff;letter-spacing:-0.100px;transform:scaleY(0.955);transform-origin:0 15.0px;">429</div>
<div class="t" style="left:1417.60px;top:12.0px;font-size:14px;color:#fff;transform:scaleY(0.955);transform-origin:0 15.0px;">1</div>
<div class="t" style="left:53.50px;top:60.0px;font-size:14px;color:#17254a;letter-spacing:-0.169px;transform:scaleY(0.955);transform-origin:0 15.0px;">Scheduled Task</div>
<div class="t" style="left:249.50px;top:60.0px;font-size:14px;color:#17254a;font-weight:700;letter-spacing:-0.317px;">Doc_237</div>
<div class="t" style="left:68.70px;top:104.0px;font-size:14px;color:#fff;font-weight:700;letter-spacing:-0.200px;">Development Mode</div>
<div class="t" style="left:219.90px;top:104.0px;font-size:14px;color:#6c7590;letter-spacing:-0.186px;transform:scaleY(0.955);transform-origin:0 15.0px;">Production Mode</div>
<div class="t" style="left:1002.90px;top:103.0px;font-size:14px;color:#17254a;letter-spacing:-0.100px;transform:scaleY(0.955);transform-origin:0 15.0px;">Run</div>
<div class="t" style="left:1081.50px;top:103.0px;font-size:14px;color:#17254a;letter-spacing:0.033px;transform:scaleY(0.955);transform-origin:0 15.0px;">Save</div>
<div class="t" style="left:1166.40px;top:103.0px;font-size:14px;color:#c5cad6;letter-spacing:-0.250px;transform:scaleY(0.955);transform-origin:0 15.0px;">Restore</div>
<div class="t" style="left:1267.80px;top:103.0px;font-size:14px;color:#17254a;letter-spacing:-0.083px;transform:scaleY(0.955);transform-origin:0 15.0px;">Publish</div>
<div class="t" style="left:85.00px;top:153.0px;font-size:14px;color:#17254a;letter-spacing:-0.167px;transform:scaleY(0.955);transform-origin:0 15.0px;">Back</div>
<div class="t" style="left:708.00px;top:154.0px;font-size:18px;color:#1c2a4c;font-weight:700;letter-spacing:0.022px;transform:scaleY(0.92);transform-origin:0 16.0px;">Data Transformation</div>
<div class="t" style="left:71.70px;top:198.0px;font-size:14px;color:#535e7b;font-weight:700;letter-spacing:-0.189px;">Data Input</div>
<div class="t" style="left:71.70px;top:689.0px;font-size:14px;color:#535e7b;font-weight:700;letter-spacing:-0.270px;">Data Output</div>
<div class="t" style="left:816.00px;top:221.0px;font-size:14px;color:#17254a;letter-spacing:-0.164px;transform:scaleY(0.955);transform-origin:0 15.0px;">No exception</div>
<div class="t" style="left:1224.60px;top:221.0px;font-size:14px;color:#17254a;letter-spacing:-0.267px;transform:scaleY(0.955);transform-origin:0 15.0px;">100%</div>
<div class="t" style="left:642.30px;top:324.0px;font-size:14px;color:#46506b;letter-spacing:-0.246px;transform:scaleY(0.955);transform-origin:0 15.0px;">DB Table Input</div>
<div class="t" style="left:790.70px;top:324.0px;font-size:14px;color:#46506b;letter-spacing:-0.142px;transform:scaleY(0.955);transform-origin:0 15.0px;">Field Setting</div>
<div class="t" style="left:914.20px;top:324.0px;font-size:14px;color:#46506b;letter-spacing:-0.231px;transform:scaleY(0.955);transform-origin:0 15.0px;">Data Filtering</div>
<div class="t" style="left:1069.00px;top:324.0px;font-size:14px;color:#46506b;letter-spacing:-0.214px;transform:scaleY(0.955);transform-origin:0 15.0px;">DB Table Output</div>
<div class="t" style="left:375.40px;top:403.0px;font-size:18px;color:#111c3c;font-weight:700;letter-spacing:0.062px;">Data Filtering</div>
<div class="t" style="left:365.30px;top:449.5px;font-size:13.5px;color:#5b6682;font-weight:700;letter-spacing:0.027px;">Node Information</div>
<div class="t" style="left:532.80px;top:449.5px;font-size:13.5px;color:#2d62dc;font-weight:700;letter-spacing:0.077px;">Filter Setting</div>
<div class="t" style="left:672.00px;top:449.5px;font-size:13.5px;color:#5b6682;font-weight:700;letter-spacing:0.036px;">Data Preview</div>
<div class="t" style="left:365.40px;top:507.0px;font-size:14px;color:#17254a;letter-spacing:-0.206px;transform:scaleY(0.955);transform-origin:0 15.0px;">Add Condition (AND)</div>
<div class="t" style="left:1406.30px;top:507.0px;font-size:14px;color:#3a6fe0;letter-spacing:-0.375px;transform:scaleY(0.955);transform-origin:0 15.0px;">Empty</div>
<div class="t" style="left:356.60px;top:564.0px;font-size:14px;color:#6c7590;letter-spacing:-0.300px;transform:scaleY(0.955);transform-origin:0 15.0px;">...</div>
<div class="t" style="left:350.80px;top:587.0px;font-size:14px;color:#2a3552;letter-spacing:-0.400px;transform:scaleY(0.955);transform-origin:0 15.0px;">And</div>
<div class="t" style="left:394.50px;top:563.0px;font-size:14px;color:#2a3552;letter-spacing:-0.150px;transform:scaleY(0.955);transform-origin:0 15.0px;">OrderDate</div>
<div class="t" style="left:584.90px;top:563.0px;font-size:14px;color:#2a3552;letter-spacing:-0.600px;transform:scaleY(0.955);transform-origin:0 15.0px;">After</div>
<div class="t" style="left:715.20px;top:562.0px;font-size:14px;color:#4a546e;letter-spacing:-0.239px;transform:scaleY(0.955);transform-origin:0 15.0px;">2011-01-01 00:00:00</div>
<div class="t" style="left:938.40px;top:562.0px;font-size:14px;color:#2a3552;letter-spacing:-0.200px;transform:scaleY(0.955);transform-origin:0 15.0px;">Value</div>
<div class="t" style="left:394.50px;top:612.0px;font-size:14px;color:#2a3552;letter-spacing:-0.183px;transform:scaleY(0.955);transform-origin:0 15.0px;">Freight</div>
<div class="t" style="left:583.90px;top:612.0px;font-size:14px;color:#2a3552;letter-spacing:-0.155px;transform:scaleY(0.955);transform-origin:0 15.0px;">Greater Than</div>
<div class="t" style="left:714.90px;top:613.0px;font-size:14px;color:#2a3552;letter-spacing:-0.100px;transform:scaleY(0.955);transform-origin:0 15.0px;">100</div>
<div class="t" style="left:99.40px;top:245.0px;font-size:14px;color:#2a3552;letter-spacing:-0.238px;transform:scaleY(0.955);transform-origin:0 15.0px;">DB Table Input</div>
<div class="t" style="left:100.00px;top:301.0px;font-size:14px;color:#2a3552;letter-spacing:-0.363px;transform:scaleY(0.955);transform-origin:0 15.0px;">API Input</div>
<div class="t" style="left:99.80px;top:357.0px;font-size:14px;color:#2a3552;letter-spacing:-0.300px;transform:scaleY(0.955);transform-origin:0 15.0px;">File Input</div>
<div class="t" style="left:100.60px;top:414.0px;font-size:14px;color:#2a3552;letter-spacing:-0.320px;transform:scaleY(0.955);transform-origin:0 15.0px;">Jodoo Input</div>
<div class="t" style="left:99.80px;top:470.0px;font-size:14px;color:#2a3552;letter-spacing:-0.250px;transform:scaleY(0.955);transform-origin:0 15.0px;">MongoDB Input</div>
<div class="t" style="left:99.60px;top:526.0px;font-size:14px;color:#2a3552;letter-spacing:-0.267px;transform:scaleY(0.955);transform-origin:0 15.0px;">SAP ERP Input</div>
<div class="t" style="left:99.80px;top:582.0px;font-size:14px;color:#2a3552;letter-spacing:-0.233px;transform:scaleY(0.955);transform-origin:0 15.0px;">Dataset Input</div>
<div class="t" style="left:99.80px;top:639.0px;font-size:14px;color:#2a3552;letter-spacing:-0.206px;transform:scaleY(0.955);transform-origin:0 15.0px;">Elasticsearch Input</div>
<div class="t" style="left:99.60px;top:736.0px;font-size:14px;color:#2a3552;letter-spacing:-0.207px;transform:scaleY(0.955);transform-origin:0 15.0px;">DB Table Output</div>
<div class="t" style="left:99.60px;top:792.0px;font-size:14px;color:#2a3552;letter-spacing:-0.214px;transform:scaleY(0.955);transform-origin:0 15.0px;">DB Table Output (Transaction)</div>
<div class="t" style="left:99.60px;top:849.0px;font-size:14px;color:#2a3552;letter-spacing:-0.240px;transform:scaleY(0.955);transform-origin:0 15.0px;">Parameter Output</div>
</body>
</html>
